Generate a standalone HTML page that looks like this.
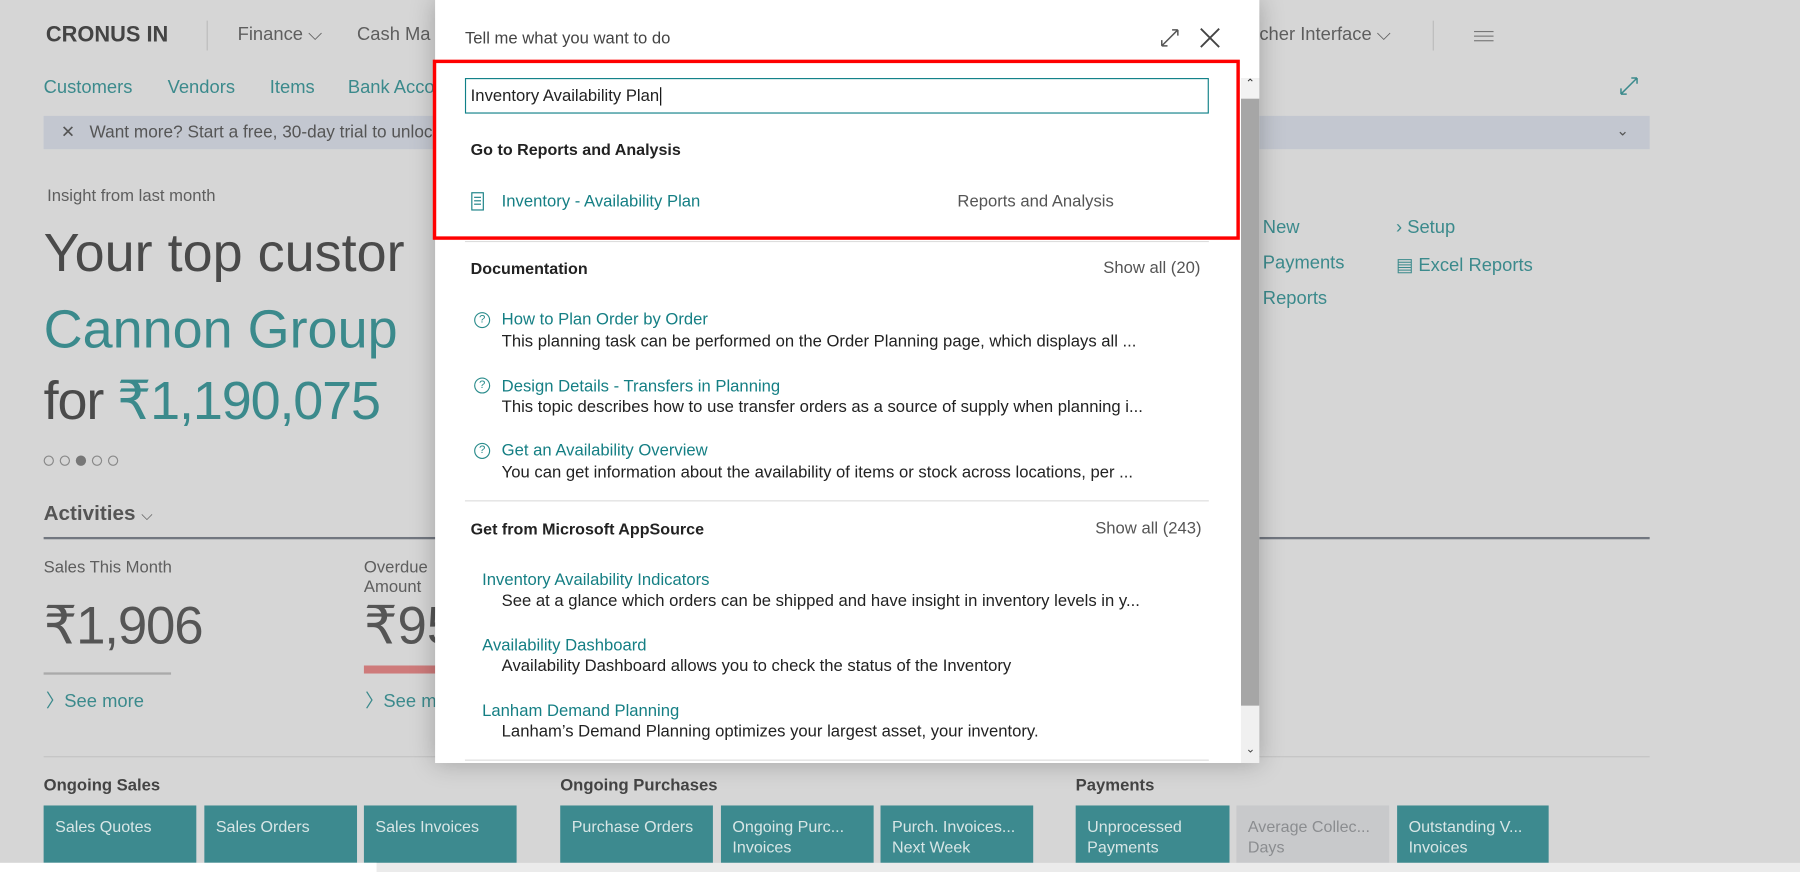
<!DOCTYPE html>
<html><head><meta charset="utf-8"><style>
*{margin:0;padding:0;box-sizing:border-box}
html,body{width:1800px;height:872px;overflow:hidden;background:#d6d6d6;font-family:"Liberation Sans",sans-serif}
#w{position:absolute;left:0;top:0;width:1568px;height:760px;transform:scale(1.148,1.1474);transform-origin:0 0;background:#d6d6d6}
.a{position:absolute;white-space:nowrap}
.t{color:#3b8a8c}
.g{color:#5e5e5e}
.tile{position:absolute;top:702px;height:50px;background:#3d8a8f;color:#d8e6e6;font-size:14px;padding:9px 10px;line-height:18px}
#dlg{position:absolute;left:379px;top:0;width:718px;height:665px;background:#fff;box-shadow:0 0 20px rgba(0,0,0,.25)}
.d{position:absolute;white-space:nowrap;font-size:14.5px}
.lk{color:#157f84}
.bk{color:#222}
.hd{color:#222;font-weight:bold;font-size:14px}
.q{position:absolute;width:14px;height:14px;border:1px solid #2a8c8c;border-radius:50%;font-size:10px;color:#2a8c8c;text-align:center;line-height:12px}
.dot{position:absolute;top:397px;width:9px;height:9px;border:1px solid #888;border-radius:50%}
</style></head><body><div id="w">
<div class="a" style="left:40px;top:20px;font-size:19px;font-weight:bold;color:#444">CRONUS IN</div>
<div class="a" style="left:180px;top:18px;width:1px;height:26px;background:#bbb"></div>
<div class="a g" style="left:207px;top:22px;font-size:16px">Finance ⌵</div>
<div class="a g" style="left:311px;top:22px;font-size:16px">Cash Ma</div>
<div class="a g" style="left:1097px;top:22px;font-size:16px">cher Interface ⌵</div>
<div class="a" style="left:1248px;top:18px;width:1px;height:26px;background:#bbb"></div>
<div class="a" style="left:1284px;top:27px;width:17px;height:1px;background:#777;box-shadow:0 4px 0 #777,0 8px 0 #777"></div>
<div class="a t" style="left:38px;top:68px;font-size:16px">Customers</div>
<div class="a t" style="left:146px;top:68px;font-size:16px">Vendors</div>
<div class="a t" style="left:235px;top:68px;font-size:16px">Items</div>
<div class="a t" style="left:303px;top:68px;font-size:16px">Bank Acco</div>
<svg class="a" style="left:1410px;top:66px" width="18" height="18"><path d="M2 16L16 2M2 16V11M2 16H7M16 2H11M16 2V7" stroke="#3b8a8c" stroke-width="1.3" fill="none"/></svg>
<div class="a" style="left:38px;top:101px;width:1399px;height:29px;background:#c3c7d0"></div>
<div class="a" style="left:53px;top:106px;font-size:15px;color:#555">✕</div>
<div class="a" style="left:78px;top:107px;font-size:15px;color:#555">Want more? Start a free, 30-day trial to unloc</div>
<div class="a" style="left:1408px;top:106px;font-size:13px;color:#555">⌄</div>
<div class="a g" style="left:41px;top:163px;font-size:14.5px">Insight from last month</div>
<div class="a" style="left:38px;top:192px;font-size:47px;color:#4a4a4a">Your top custor</div>
<div class="a t" style="left:38px;top:259px;font-size:47px">Cannon Group</div>
<div class="a" style="left:38px;top:321px;font-size:47px;color:#4a4a4a;letter-spacing:-1px">for <span class="t">₹1,190,075</span></div>
<div class="dot" style="left:38px"></div><div class="dot" style="left:52px"></div><div class="dot" style="left:66px;background:#777;border-color:#777"></div><div class="dot" style="left:80px"></div><div class="dot" style="left:94px"></div>
<div class="a" style="left:38px;top:437px;font-size:18px;font-weight:bold;color:#555">Activities <span style="font-weight:normal;font-size:13px">⌵</span></div>
<div class="a" style="left:38px;top:468px;width:1399px;height:2px;background:#727780"></div>
<div class="a g" style="left:38px;top:487px;font-size:14.5px">Sales This Month</div>
<div class="a g" style="left:317px;top:487px;font-size:14.5px;line-height:17px">Overdue<br>Amount</div>
<div class="a" style="left:38px;top:518px;font-size:46px;color:#555;letter-spacing:-1px">₹1,906</div>
<div class="a" style="left:317px;top:518px;font-size:46px;color:#555">₹95</div>
<div class="a" style="left:38px;top:586px;width:111px;height:2px;background:#aaa"></div>
<div class="a" style="left:317px;top:580px;width:70px;height:7px;background:#ce7b7b"></div>
<div class="a t" style="left:40px;top:597px;font-size:16px">〉See more</div>
<div class="a t" style="left:318px;top:597px;font-size:16px">〉See m</div>
<div class="a" style="left:38px;top:659px;width:1399px;height:1px;background:#c4c4c4"></div>
<div class="a t" style="left:1100px;top:190px;font-size:16px">New</div>
<div class="a t" style="left:1100px;top:221px;font-size:16px">Payments</div>
<div class="a t" style="left:1100px;top:252px;font-size:16px">Reports</div>
<div class="a t" style="left:1216px;top:190px;font-size:16px">›  Setup</div>
<div class="a t" style="left:1216px;top:221px;font-size:16px">▤ Excel Reports</div>
<div class="a" style="left:38px;top:677px;font-size:14.5px;font-weight:bold;color:#444">Ongoing Sales</div>
<div class="a" style="left:488px;top:677px;font-size:14.5px;font-weight:bold;color:#444">Ongoing Purchases</div>
<div class="a" style="left:937px;top:677px;font-size:14.5px;font-weight:bold;color:#444">Payments</div>
<div class="tile" style="left:38px;width:133px">Sales Quotes</div>
<div class="tile" style="left:178px;width:133px">Sales Orders</div>
<div class="tile" style="left:317px;width:133px">Sales Invoices</div>
<div class="tile" style="left:488px;width:133px">Purchase Orders</div>
<div class="tile" style="left:628px;width:133px">Ongoing Purc...<br>Invoices</div>
<div class="tile" style="left:767px;width:133px">Purch. Invoices...<br>Next Week</div>
<div class="tile" style="left:937px;width:134px">Unprocessed<br>Payments</div>
<div class="tile" style="left:1077px;width:133px;background:#c8c9cb;color:#8b8d90">Average Collec...<br>Days</div>
<div class="tile" style="left:1217px;width:132px">Outstanding V...<br>Invoices</div>
<div class="a" style="left:0;top:752px;width:1568px;height:8px;background:#ebebeb"></div>
<div class="a" style="left:0;top:752px;width:328px;height:8px;background:#fff"></div>
<div id="dlg">
<div class="d" style="left:26px;top:26px;color:#444;font-size:14.5px">Tell me what you want to do</div>
<svg class="a" style="left:631px;top:24px" width="18" height="18"><path d="M2 16L16 2M2 16V11M2 16H7M16 2H11M16 2V7" stroke="#555" stroke-width="1.3" fill="none"/></svg>
<svg class="a" style="left:666px;top:24px" width="18" height="18"><path d="M1 1L17 17M17 1L1 17" stroke="#444" stroke-width="1.6"/></svg>
<div class="a" style="left:702px;top:68px;width:16px;height:597px;background:#a6a6a6"></div>
<div class="a" style="left:702px;top:68px;width:16px;height:18px;background:#f2f2f2;font-size:10px;text-align:center;color:#333">⌃</div>
<div class="a" style="left:702px;top:615px;width:16px;height:50px;background:#f0f0f0"></div>
<div class="a" style="left:706px;top:648px;font-size:10px;color:#444">⌄</div>
<div class="a" style="left:26px;top:68px;width:648px;height:31px;border:1px solid #0f8088;background:#fff"></div>
<div class="d bk" style="left:31px;top:76px;font-size:14.5px">Inventory Availability Plan<span style="border-left:1px solid #000;margin-left:1px"></span></div>
<div class="d hd" style="left:31px;top:122px">Go to Reports and Analysis</div>
<svg class="a" style="left:31px;top:167px" width="12" height="17"><rect x="1" y="1" width="10" height="15" fill="none" stroke="#157f84"/><path d="M3 5h6M3 8h6M3 11h6" stroke="#157f84"/></svg>
<div class="d lk" style="left:58px;top:168px">Inventory - Availability Plan</div>
<div class="d" style="left:455px;top:168px;color:#555">Reports and Analysis</div>
<div class="a" style="left:26px;top:210px;width:648px;height:1px;background:#ddd"></div>
<div class="d hd" style="left:31px;top:226px">Documentation</div>
<div class="d" style="left:582px;top:226px;color:#555">Show all (20)</div>
<div class="q" style="left:34px;top:272px">?</div>
<div class="d lk" style="left:58px;top:271px">How to Plan Order by Order</div>
<div class="d bk" style="left:58px;top:290px">This planning task can be performed on the Order Planning page, which displays all ...</div>
<div class="q" style="left:34px;top:329px">?</div>
<div class="d lk" style="left:58px;top:329px">Design Details - Transfers in Planning</div>
<div class="d bk" style="left:58px;top:347px">This topic describes how to use transfer orders as a source of supply when planning i...</div>
<div class="q" style="left:34px;top:386px">?</div>
<div class="d lk" style="left:58px;top:385px">Get an Availability Overview</div>
<div class="d bk" style="left:58px;top:404px">You can get information about the availability of items or stock across locations, per ...</div>
<div class="a" style="left:26px;top:436px;width:648px;height:1px;background:#ddd"></div>
<div class="d hd" style="left:31px;top:453px">Get from Microsoft AppSource</div>
<div class="d" style="left:575px;top:453px;color:#555">Show all (243)</div>
<div class="d lk" style="left:41px;top:498px">Inventory Availability Indicators</div>
<div class="d bk" style="left:58px;top:516px">See at a glance which orders can be shipped and have insight in inventory levels in y...</div>
<div class="d lk" style="left:41px;top:555px">Availability Dashboard</div>
<div class="d bk" style="left:58px;top:573px">Availability Dashboard allows you to check the status of the Inventory</div>
<div class="d lk" style="left:41px;top:612px">Lanham Demand Planning</div>
<div class="d bk" style="left:58px;top:630px">Lanham’s Demand Planning optimizes your largest asset, your inventory.</div>
<div class="a" style="left:26px;top:662px;width:648px;height:1px;background:#ddd"></div>
</div>
<div class="a" style="left:377px;top:52px;width:703px;height:157px;border:3px solid #f00"></div>
</div></body></html>
